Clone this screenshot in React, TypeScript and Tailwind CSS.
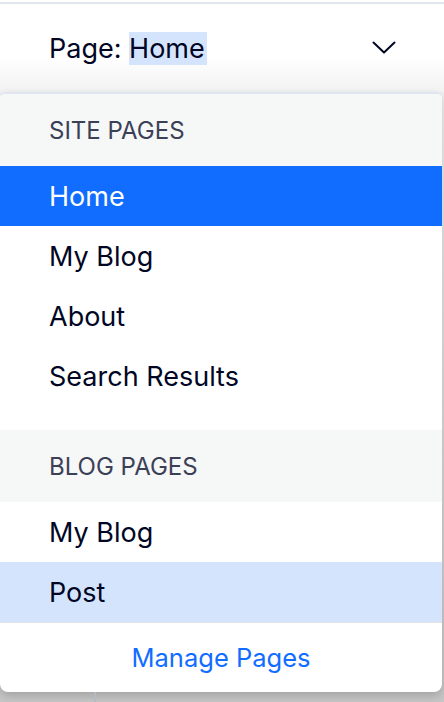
import React from 'react';

const font = { fontFamily: 'Inter, "Noto Sans", sans-serif' };

const sitePages = ['Home', 'My Blog', 'About', 'Search Results'];
const blogPages = ['My Blog', 'Post'];

const SectionHeader = ({ label, className = '' }: { label: string; className?: string }) => (
  <div className={`flex items-center pl-[49px] pt-[2px] bg-[#f6f7f7] text-[24px] text-[#3b4057] ${className}`}>
    {label}
  </div>
);

const Row = ({ label, state }: { label: string; state?: 'active' | 'hover' }) => {
  const tone =
    state === 'active'
      ? 'bg-[#116dff] text-white'
      : state === 'hover'
        ? 'bg-[#d5e4fd] text-[#000624]'
        : 'bg-white text-[#000624]';
  return (
    <div className={`h-[60px] flex items-center pl-[49px] pt-[2px] text-[27px] ${tone}`}>{label}</div>
  );
};

export default function App() {
  return (
    <div className="w-[444px] h-[702px] flex flex-col bg-white overflow-hidden" style={font}>
      {/* top border of the editor bar */}
      <div className="mt-[2px] h-[2px] bg-[#e1e6ec]" />

      {/* page selector */}
      <div className="h-[88px] flex items-center justify-between pl-[49px] pr-[48px] bg-gradient-to-b from-white from-60% to-[#f2f2f2]">
        <div className="text-[27px] text-[#000624] leading-[35px]">
          Page: <span className="bg-[#d5e4fd] pr-[2px]">Home</span>
        </div>
        <svg width="24" height="13" viewBox="0 0 24 13" fill="none" className="mt-[-2px]">
          <path d="M1.5 1.5L12 11.5L22.5 1.5" stroke="#000624" strokeWidth="2" strokeLinecap="round" strokeLinejoin="round" />
        </svg>
      </div>

      {/* dropdown panel */}
      <div className="flex-1 flex flex-col bg-gradient-to-b from-[#f0f0f0] to-[#c6c6c6]">
        <div className="mr-[2px] flex flex-col bg-white border-t-2 border-[#dfe6f1] rounded-t-[6px] rounded-b-[8px] overflow-hidden shadow-[0_4px_10px_rgba(0,0,0,0.18)]">
          <SectionHeader label="SITE PAGES" className="h-[72px]" />
          {sitePages.map((p, i) => (
            <Row key={p} label={p} state={i === 0 ? 'active' : undefined} />
          ))}
          <div className="h-[24px]" />
          <SectionHeader label="BLOG PAGES" className="h-[72px]" />
          {blogPages.map((p) => (
            <Row key={p} label={p} state={p === 'Post' ? 'hover' : undefined} />
          ))}
          <div className="h-[70px] flex items-center justify-center pt-[2px] border-t border-[#e3e3e3] text-[25.5px] text-[#116dff]">
            Manage Pages
          </div>
        </div>
        {/* editor behind the dropdown */}
        <div className="flex-1 ml-[94px] w-[2px] bg-[#b4b9c2]" />
      </div>
    </div>
  );
}
